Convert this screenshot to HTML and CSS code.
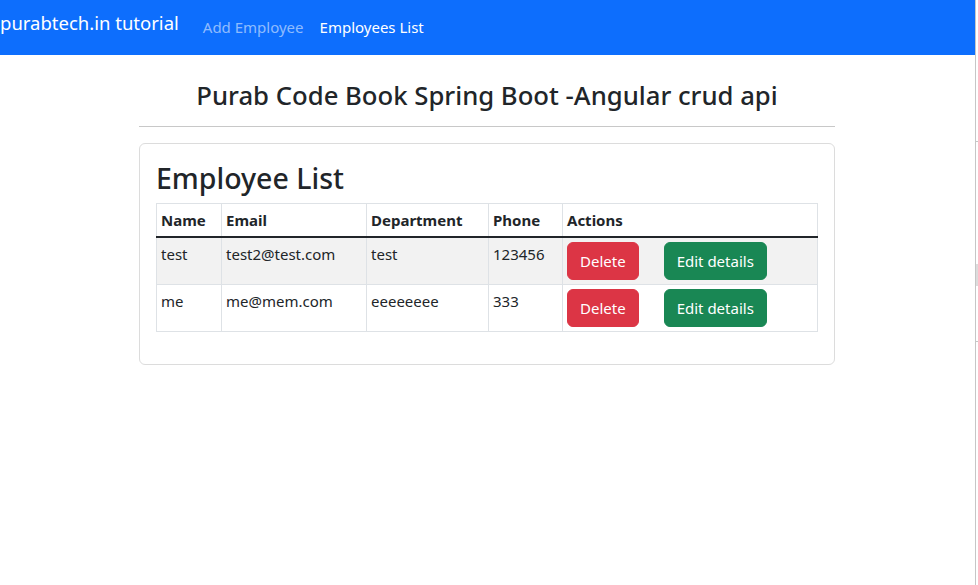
FILE: index.html
```html
<!DOCTYPE html>
<html lang="en">
<head>
<meta charset="utf-8">
<title>Employees List</title>
<link rel="stylesheet" href="styles.css">
</head>
<body>
<div class="viewport">
  <div class="page">
    <nav class="navbar">
      <a class="brand" href="#">purabtech.in tutorial</a>
      <ul class="nav">
        <li><a class="nav-link" href="#">Add Employee</a></li>
        <li><a class="nav-link active" href="#">Employees List</a></li>
      </ul>
    </nav>
    <main class="container">
      <h3 class="title">Purab Code Book Spring Boot -Angular crud api</h3>
      <hr class="rule">
      <section class="card">
        <h2 class="card-title">Employee List</h2>
        <table class="table">
          <colgroup>
            <col class="c-name"><col class="c-email"><col class="c-dept"><col class="c-phone"><col class="c-actions">
          </colgroup>
          <thead>
            <tr><th>Name</th><th>Email</th><th>Department</th><th>Phone</th><th>Actions</th></tr>
          </thead>
          <tbody>
            <tr class="striped">
              <td>test</td><td>test2@test.com</td><td>test</td><td>123456</td>
              <td class="actions"><button class="btn btn-danger">Delete</button><button class="btn btn-success">Edit details</button></td>
            </tr>
            <tr>
              <td>me</td><td>me@mem.com</td><td>eeeeeeee</td><td>333</td>
              <td class="actions"><button class="btn btn-danger">Delete</button><button class="btn btn-success">Edit details</button></td>
            </tr>
          </tbody>
        </table>
      </section>
    </main>
  </div>
  <div class="edge">
    <span class="tick tick-a"></span>
    <span class="thumb"></span>
    <span class="tick tick-b"></span>
  </div>
</div>
</body>
</html>
```
FILE: styles.css
```css
* { box-sizing: border-box; }
html, body { margin: 0; padding: 0; }
body {
  font-family: "Noto Sans", "Open Sans", sans-serif;
  font-size: 15px;
  line-height: 24px;
  color: #212529;
  background: #fff;
}
.viewport { display: flex; width: 978px; height: 585px; overflow: hidden; }
.page { width: 975px; flex: none; }
.edge { position: relative; width: 3px; border-left: 1px solid #c6c6c6; flex: none; }
.tick { position: absolute; left: 0; width: 2px; height: 1px; background: #c6c6c6; }
.tick-a { top: 141px; }
.tick-b { top: 341px; }
.thumb { position: absolute; left: 0; top: 264px; width: 2px; height: 22px; background: #dcdcdc; }

.navbar {
  display: flex;
  align-items: flex-start;
  height: 55px;
  background: #0d6efd;
}
.brand {
  color: #fff;
  text-decoration: none;
  font-size: 18.5px;
  line-height: 30px;
  padding-top: 8px;
  margin-right: 16px;
}
.nav { display: flex; list-style: none; margin: 0; padding: 0; padding-top: 11px; }
.nav-link {
  display: block;
  padding: 4px 8px;
  line-height: 24px;
  font-size: 15px;
  color: rgba(255,255,255,.55);
  text-decoration: none;
}
.nav-link.active { color: #fff; }

.container { width: 696px; margin-left: 139px; }
.title {
  margin: 0;
  padding-top: 25px;
  text-align: center;
  font-size: 25.7px;
  font-weight: 500;
  line-height: 32px;
}
.rule {
  margin: 14px 0 16px;
  border: 0;
  border-top: 1px solid #c8c8c8;
}
.card {
  border: 1px solid #dcdcdc;
  border-radius: 6px;
  padding: 16px;
}
.card-title {
  margin: 0 0 7px;
  font-size: 28.5px;
  font-weight: 500;
  line-height: 36px;
}
.table {
  width: 100%;
  border-collapse: collapse;
  table-layout: fixed;
  margin-bottom: 16px;
}
.c-name { width: 65px; }
.c-email { width: 145px; }
.c-dept { width: 122px; }
.c-phone { width: 74px; }
.table th, .table td {
  border: 1px solid #dee2e6;
  padding: 4px;
  text-align: left;
  vertical-align: top;
  white-space: nowrap;
}
.table th { font-weight: 700; }
.table thead th { border-bottom: 2px solid #212529; }
.striped td { background: #f2f2f2; }
.btn {
  font-family: inherit;
  font-size: 15px;
  line-height: 24px;
  padding: 6px 12px;
  border: 1px solid transparent;
  border-radius: 6px;
  color: #fff;
  cursor: pointer;
}
.btn-danger { background: #dc3545; border-color: #dc3545; }
.btn-success { background: #198754; border-color: #198754; margin-left: 25px; }
```
